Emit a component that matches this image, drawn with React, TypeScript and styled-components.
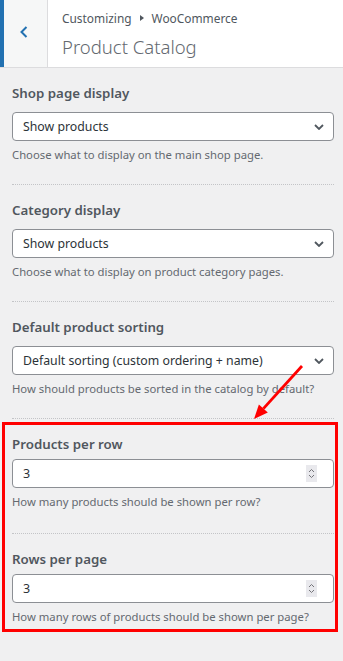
import React from "react";
import styled, { createGlobalStyle } from "styled-components";

const GlobalStyle = createGlobalStyle`
  html, body {
    margin: 0;
    padding: 0;
    background: #f0f0f1;
  }
  body {
    font-family: "Noto Sans", "Open Sans", sans-serif;
    color: #50575e;
  }
  * {
    box-sizing: border-box;
  }
`;

const Page = styled.div`
  position: relative;
  width: 343px;
  min-height: 661px;
  background: #f0f0f1;
`;

// Header

const Header = styled.header`
  display: flex;
  height: 68px;
  background: #fff;
  border-bottom: 1px solid #dcdcde;
`;

const BackButton = styled.button`
  display: flex;
  align-items: center;
  justify-content: center;
  flex: 0 0 48px;
  height: 100%;
  padding: 0 4px 3px 0;
  margin: 0;
  background: #f6f7f7;
  border: none;
  border-left: 4px solid #2271b1;
  border-right: 1px solid #dcdcde;
  cursor: pointer;
`;

const TitleBlock = styled.div`
  padding: 9px 0 0 14px;
`;

const Crumb = styled.div`
  display: flex;
  align-items: center;
  font-size: 11.9px;
  line-height: 18px;
  color: #50575e;
`;

const CrumbArrow = styled.span`
  display: inline-block;
  width: 0;
  height: 0;
  margin: 0 8px;
  border-left: 4px solid #50575e;
  border-top: 3px solid transparent;
  border-bottom: 3px solid transparent;
`;

const Title = styled.h3`
  margin: 7px 0 0;
  font-size: 18.5px;
  line-height: 26px;
  font-weight: 300;
  color: #646970;
`;

// Controls

const Controls = styled.div`
  padding: 0 9px 0 12px;
`;

const Section = styled.div`
  padding: 13px 0 20px;
  border-bottom: 1px dotted #c3c4c7;
  &:last-child {
    border-bottom: none;
    padding-bottom: 6px;
  }
`;

const NumberSection = styled(Section)`
  padding-bottom: 22px;
`;

const Label = styled.label<{ compact?: boolean }>`
  display: block;
  font-size: 13.3px;
  font-weight: 600;
  line-height: 24px;
  margin-bottom: ${(props) => (props.compact ? "3px" : "7px")};
  color: #50575e;
`;

const Field = styled.div`
  display: flex;
  align-items: center;
  height: 29px;
  background: #fff;
  border: 1px solid #8c8f94;
  border-radius: 4px;
  color: #2c3338;
  font-size: 12.3px;
`;

const SelectField = styled(Field)`
  padding: 0 9px 0 10px;
  svg {
    flex: 0 0 auto;
  }
`;

const NumberField = styled(Field)`
  padding: 0 16px 0 10px;
  font-size: 12.5px;
`;

const Value = styled.span`
  flex: 1;
  line-height: 27px;
  white-space: nowrap;
  overflow: hidden;
`;

const Spinner = styled.span`
  display: flex;
  align-items: center;
  justify-content: center;
  width: 11px;
  height: 17px;
  background: #e9e9ed;
`;

const Description = styled.p`
  margin: 5px 0 0;
  font-size: 11.3px;
  line-height: 18px;
  color: #646970;
`;

// Annotation

const Highlight = styled.div`
  position: relative;
  &::after {
    content: "";
    position: absolute;
    top: 3px;
    left: -10px;
    right: -4px;
    bottom: 0;
    border: 3px solid #ff0000;
    pointer-events: none;
  }
`;

const Arrow = styled.svg`
  position: absolute;
  left: 246px;
  top: 360px;
  width: 64px;
  height: 66px;
  pointer-events: none;
`;

const Chevron = () => (
  <svg width="10" height="6" viewBox="0 0 10 6">
    <path d="M1 1 L5 5 L9 1" fill="none" stroke="#50575e" strokeWidth="1.8" />
  </svg>
);

const SpinIcon = () => (
  <svg width="7" height="13" viewBox="0 0 7 13">
    <path
      d="M1 5 L3.5 2.5 L6 5 M1 8 L3.5 10.5 L6 8"
      fill="none"
      stroke="#75757a"
      strokeWidth="1"
    />
  </svg>
);

interface ControlProps {
  label: string;
  value: string;
  description: string;
}

const SelectControl = ({ label, value, description }: ControlProps) => (
  <Section>
    <Label>{label}</Label>
    <SelectField>
      <Value>{value}</Value>
      <Chevron />
    </SelectField>
    <Description>{description}</Description>
  </Section>
);

const NumberControl = ({ label, value, description }: ControlProps) => (
  <NumberSection>
    <Label compact>{label}</Label>
    <NumberField>
      <Value>{value}</Value>
      <Spinner>
        <SpinIcon />
      </Spinner>
    </NumberField>
    <Description>{description}</Description>
  </NumberSection>
);

export default function App() {
  return (
    <Page>
      <GlobalStyle />
      <Header>
        <BackButton aria-label="Back">
          <svg width="10" height="12" viewBox="0 0 10 12">
            <path d="M7.5 1 L2.5 6 L7.5 11" fill="none" stroke="#2271b1" strokeWidth="2" />
          </svg>
        </BackButton>
        <TitleBlock>
          <Crumb>
            Customizing
            <CrumbArrow />
            WooCommerce
          </Crumb>
          <Title>Product Catalog</Title>
        </TitleBlock>
      </Header>
      <Controls>
        <SelectControl
          label="Shop page display"
          value="Show products"
          description="Choose what to display on the main shop page."
        />
        <SelectControl
          label="Category display"
          value="Show products"
          description="Choose what to display on product category pages."
        />
        <SelectControl
          label="Default product sorting"
          value="Default sorting (custom ordering + name)"
          description="How should products be sorted in the catalog by default?"
        />
        <Highlight>
          <NumberControl
            label="Products per row"
            value="3"
            description="How many products should be shown per row?"
          />
          <NumberControl
            label="Rows per page"
            value="3"
            description="How many rows of products should be shown per page?"
          />
        </Highlight>
      </Controls>
      <Arrow viewBox="0 0 64 66">
        <line x1="56" y1="6" x2="17.4" y2="48.6" stroke="#ff0000" strokeWidth="2.8" />
        <polygon points="8,59 21.8,52.6 12.9,44.6" fill="#ff0000" />
      </Arrow>
    </Page>
  );
}
